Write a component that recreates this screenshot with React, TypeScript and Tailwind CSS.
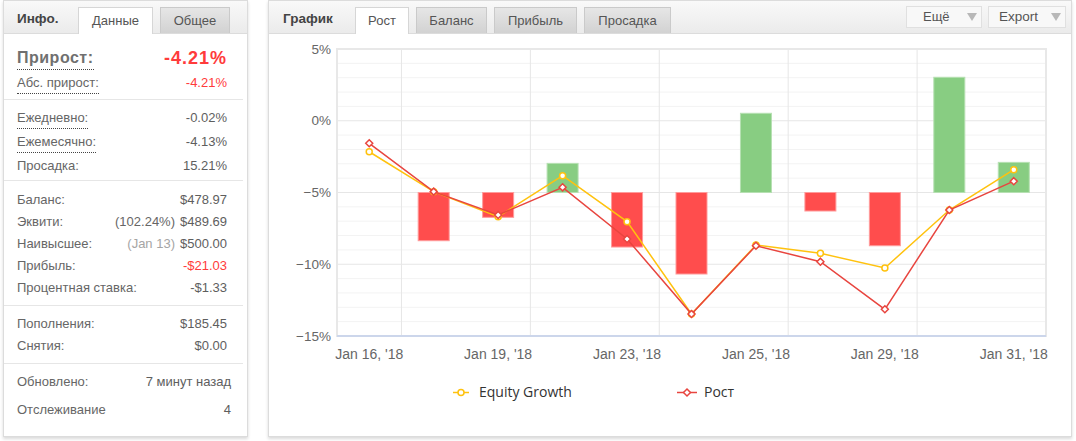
const growth = [-1.57, -4.94, -6.57, -4.64, -8.24, -13.47, -8.71, -9.82, -13.14, -6.22, -4.21];
const equity = [-2.16, -4.94, -6.69, -3.83, -7.03, -13.47, -8.66, -9.24, -10.26, -6.22, -3.41];
const daily: (number | null)[] = [null, -8.36, -6.73, -2.97, -8.8, -10.68, 0.52, -6.29, -8.71, 3.03, -2.9];
const dates = ["Jan 16, '18", "Jan 19, '18", "Jan 23, '18", "Jan 25, '18", "Jan 29, '18", "Jan 31, '18"];

// plot box inside the svg
const L = 68;
const R = 777;
const T = 15;
const B = 302;
const cw = (R - L) / 11;
const yv = (v: number) => T + (5 - v) * ((B - T) / 20);
const cx = (i: number) => L + (i + 0.5) * cw;

const YELLOW = '#ffc20e';
const RED = '#e8453f';

type RowProps = {
  label: string;
  value: string;
  height: string;
  note?: string;
  noteClass?: string;
  valueClass?: string;
  dotted?: boolean;
};

function Row({ label, value, height, note, noteClass = 'text-[#666]', valueClass = 'text-[#5e5e5e]', dotted }: RowProps) {
  return (
    <div className={`flex items-center justify-between ${height}`}>
      <span className={dotted ? 'leading-[20px] border-b border-dotted border-[#444]' : 'leading-[18px]'}>{label}</span>
      <span className={`leading-[18px] ${valueClass}`}>
        {note && <span className={`mr-[5px] ${noteClass}`}>{note}</span>}
        {value}
      </span>
    </div>
  );
}

function Diamond({ x, y }: { x: number; y: number }) {
  return (
    <polygon
      points={`${x},${y - 3.5} ${x + 3.5},${y} ${x},${y + 3.5} ${x - 3.5},${y}`}
      fill="#fff"
      stroke={RED}
      strokeWidth={1.5}
    />
  );
}

function InfoPanel() {
  return (
    <div className="w-[245px] h-[437px] border border-[#dcdcdc] bg-white shadow-[0_2px_3px_rgba(0,0,0,0.15)] flex flex-col">
      <div className="h-[33px] border-b border-[#dcdcdc] bg-linear-to-b from-[#f9f9f9] to-[#ebebeb] flex items-end pl-[13px]">
        <div className="w-[44px] h-[27px] flex items-center font-bold text-[13.5px] text-[#444]">Инфо.</div>
        <div className="ml-[17px] -mb-px h-[27px] w-[75px] bg-white border border-b-0 border-[#d6d6d6] flex items-center justify-center text-[#555]">
          Данные
        </div>
        <div className="ml-[7px] h-[26px] w-[70px] bg-linear-to-b from-[#e6e6e6] to-[#d2d2d2] border border-b-0 border-[#cacaca] flex items-center justify-center text-[#555]">
          Общее
        </div>
      </div>

      <div className="pt-[11px] pb-[4px] pl-[13px] pr-[16px] border-b border-[#e6e6e6] mr-[4px]">
        <div className="flex items-center justify-between h-[26px]">
          <span className="leading-[22px] border-b border-dotted border-[#444] font-bold text-[16px] tracking-[0.5px] text-[#707070]">
            Прирост:
          </span>
          <span className="font-bold text-[18px] tracking-[1px] text-[#ff3b3b] leading-[20px]">-4.21%</span>
        </div>
        <Row height="h-[24px]" label="Абс. прирост:" value="-4.21%" valueClass="text-[#ff3b3b]" dotted />
      </div>

      <div className="pt-[6px] pb-[2px] pl-[13px] pr-[16px] border-b border-[#e6e6e6] mr-[4px]">
        <Row height="h-[24px]" label="Ежедневно:" value="-0.02%" dotted />
        <Row height="h-[24px]" label="Ежемесячно:" value="-4.13%" dotted />
        <Row height="h-[24px]" label="Просадка:" value="15.21%" />
      </div>

      <div className="pt-[8px] pb-[6px] pl-[13px] pr-[16px] border-b border-[#e6e6e6] mr-[4px]">
        <Row height="h-[22px]" label="Баланс:" value="$478.97" />
        <Row height="h-[22px]" label="Эквити:" note="(102.24%)" value="$489.69" />
        <Row height="h-[22px]" label="Наивысшее:" note="(Jan 13)" noteClass="text-[#a5a5a5]" value="$500.00" />
        <Row height="h-[22px]" label="Прибыль:" value="-$21.03" valueClass="text-[#ff3b3b]" />
        <Row height="h-[22px]" label="Процентная ставка:" value="-$1.33" />
      </div>

      <div className="pt-[7px] pb-[6px] pl-[13px] pr-[16px] border-b border-[#e6e6e6] mr-[4px]">
        <Row height="h-[22px]" label="Пополнения:" value="$185.45" />
        <Row height="h-[22px]" label="Снятия:" value="$0.00" />
      </div>

      <div className="pt-[4px] pl-[13px] pr-[16px]">
        <Row height="h-[28px]" label="Обновлено:" value="7 минут назад" />
        <Row height="h-[28px]" label="Отслеживание" value="4" />
      </div>
    </div>
  );
}

function GrowthChart() {
  const minor: number[] = [];
  for (let v = -14; v <= 4; v++) if (v % 5 !== 0) minor.push(v);
  const major = [5, 0, -5, -10];
  const axisFont = "'Liberation Sans', Arial, sans-serif";

  return (
    <svg width={802} height={402} className="block">
      {minor.map((v) => (
        <line key={`m${v}`} x1={L} x2={R} y1={yv(v)} y2={yv(v)} stroke="#f3f3f3" strokeWidth={1} />
      ))}
      {major.map((v) => (
        <line key={`M${v}`} x1={L} x2={R} y1={yv(v)} y2={yv(v)} stroke="#e6e6e6" strokeWidth={1} />
      ))}
      {[1, 3, 5, 7, 9].map((k) => (
        <line key={`v${k}`} x1={L + k * cw} x2={L + k * cw} y1={T} y2={B} stroke="#e6e6e6" strokeWidth={1} />
      ))}
      <rect x={L} y={T} width={R - L} height={B - T} fill="none" stroke="#e8e8e8" strokeWidth={2} />
      <line x1={L} x2={R} y1={B} y2={B} stroke="#ccd6eb" strokeWidth={2} />

      {[5, 0, -5, -10, -15].map((v) => (
        <text key={`y${v}`} x={62} y={yv(v) + 4.5} textAnchor="end" fontSize={13.5} fill="#666" fontFamily={axisFont}>
          {v < 0 ? `\u2212${-v}%` : `${v}%`}
        </text>
      ))}
      {dates.map((d, n) => (
        <text key={d} x={cx(n * 2)} y={325} textAnchor="middle" fontSize={14} fill="#666" fontFamily={axisFont}>
          {d}
        </text>
      ))}

      {daily.map((v, i) => {
        if (v === null) return null;
        const base = yv(-5);
        const top = Math.min(base, yv(v));
        const h = Math.abs(yv(v) - base);
        const up = v > -5;
        return (
          <rect
            key={`b${i}`}
            x={cx(i) - 15.5}
            y={top}
            width={31}
            height={h}
            fill={up ? '#88cd82' : '#ff4d4d'}
            stroke={up ? '#b6e0b2' : '#ff9b9b'}
            strokeWidth={1}
          />
        );
      })}

      <polyline
        points={equity.map((v, i) => `${cx(i)},${yv(v)}`).join(' ')}
        fill="none"
        stroke={YELLOW}
        strokeWidth={1.5}
      />
      {equity.map((v, i) => (
        <circle key={`e${i}`} cx={cx(i)} cy={yv(v)} r={3} fill="#fff" stroke={YELLOW} strokeWidth={1.5} />
      ))}
      <polyline
        points={growth.map((v, i) => `${cx(i)},${yv(v)}`).join(' ')}
        fill="none"
        stroke={RED}
        strokeWidth={1.5}
      />
      {growth.map((v, i) => (
        <Diamond key={`g${i}`} x={cx(i)} y={yv(v)} />
      ))}

      <line x1={184} x2={200} y1={358.5} y2={358.5} stroke={YELLOW} strokeWidth={1.5} />
      <circle cx={192} cy={358.5} r={3} fill="#fff" stroke={YELLOW} strokeWidth={1.5} />
      <text x={210} y={362.7} fontSize={14} fill="#333" fontFamily="'Open Sans', sans-serif">
        Equity Growth
      </text>
      <line x1={408} x2={428} y1={358.5} y2={358.5} stroke={RED} strokeWidth={1.5} />
      <Diamond x={418} y={358.5} />
      <text x={435} y={362.7} fontSize={14} fill="#333" fontFamily="'Open Sans', sans-serif">
        Рост
      </text>
    </svg>
  );
}

function ChartPanel() {
  const tab =
    'ml-[7px] h-[26px] bg-linear-to-b from-[#e6e6e6] to-[#d2d2d2] border border-b-0 border-[#cacaca] flex items-center justify-center text-[#555]';
  return (
    <div className="w-[804px] h-[437px] border border-[#dcdcdc] bg-white shadow-[0_2px_3px_rgba(0,0,0,0.15)] flex flex-col">
      <div className="h-[33px] border-b border-[#dcdcdc] bg-linear-to-b from-[#f9f9f9] to-[#ebebeb] flex items-end pl-[14px]">
        <div className="w-[55px] h-[27px] flex items-center font-bold text-[13.5px] text-[#444]">График</div>
        <div className="ml-[17px] -mb-px h-[27px] w-[54px] bg-white border border-b-0 border-[#d6d6d6] flex items-center justify-center text-[#555]">
          Рост
        </div>
        <div className={`${tab} w-[71px]`}>Баланс</div>
        <div className={`${tab} w-[83px]`}>Прибыль</div>
        <div className={`${tab} w-[87px]`}>Просадка</div>
        <div className="ml-auto self-start mt-[5px] mr-[5px] flex gap-[6px]">
          <div className="w-[76px] h-[22px] bg-[#f8f8f8] border border-[#e0e0e0] flex items-center pl-[16px] pr-[4px] text-[#555]">
            <span>Ещё</span>
            <span className="ml-auto w-0 h-0 border-l-[5px] border-r-[5px] border-t-[8px] border-l-transparent border-r-transparent border-t-[#b8b8b8]" />
          </div>
          <div className="w-[78px] h-[22px] bg-[#f8f8f8] border border-[#e0e0e0] flex items-center pl-[10px] pr-[4px] text-[13.5px] text-[#555]">
            <span>Export</span>
            <span className="ml-auto w-0 h-0 border-l-[5px] border-r-[5px] border-t-[8px] border-l-transparent border-r-transparent border-t-[#b8b8b8]" />
          </div>
        </div>
      </div>
      <GrowthChart />
    </div>
  );
}

export default function App() {
  return (
    <div className="w-[1076px] h-[441px] bg-white flex gap-[20px] pl-[3px] font-['Liberation_Sans',Arial,sans-serif] text-[13px] text-[#666]">
      <InfoPanel />
      <ChartPanel />
    </div>
  );
}
